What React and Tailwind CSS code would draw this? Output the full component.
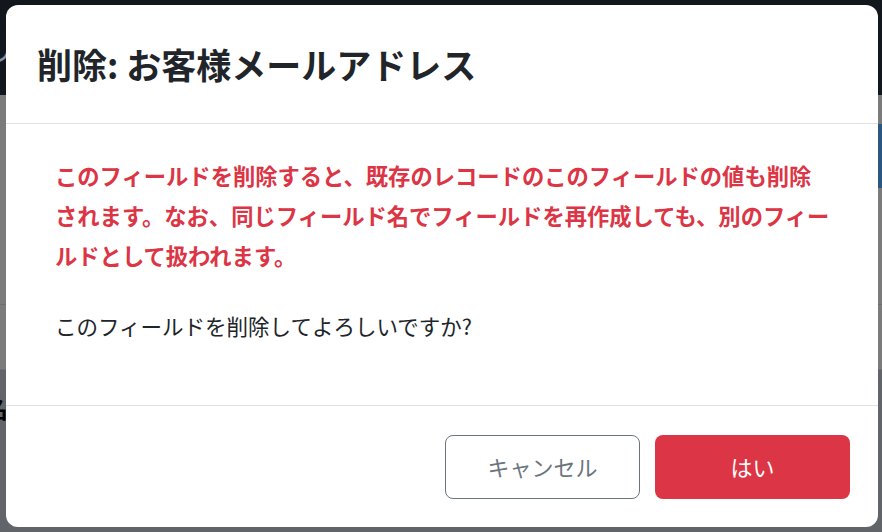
/**
 * DeleteFieldDialog - フィールド削除の確認モーダル
 */

const JP_FONT = "font-['Noto_Sans_CJK_JP','Noto_Sans',sans-serif]";

function PageBehind() {
  // モーダルの後ろに見えている画面 (背景は暗くなっている)
  return (
    <div className="flex h-full w-full flex-col">
      <div className="flex h-[95px] items-center bg-[#12171d]">
        <span className="-ml-[14px] text-[30px] text-[#7f8fa6]">リ</span>
      </div>
      <div className="flex flex-1 flex-col bg-[#7b7b7b]">
        <div className="h-[29px]" />
        <div className="flex h-[64px] justify-end">
          <div className="w-[6px] bg-[#2b5680]" />
        </div>
        <div className="h-[116px]" />
        <div className="h-px bg-[#6e6e6e]" />
        <div className="h-[64px]" />
        <div className="h-px bg-[#6e6e6e]" />
        <div className="flex flex-1 bg-[#616569] pt-[20px]">
          <span className="-ml-[16px] text-[24px] font-bold text-black">名</span>
        </div>
      </div>
    </div>
  );
}

export default function App() {
  return (
    <div className={`relative h-[532px] w-[882px] overflow-hidden ${JP_FONT}`}>
      <PageBehind />

      {/* モーダル */}
      <div className="absolute left-[6px] top-[5px] flex h-[522px] w-[872px] flex-col rounded-[12px] bg-white">
        {/* ヘッダー */}
        <div className="flex h-[119px] items-center border-b border-[#dee2e6] px-[31px]">
          <h2 className="text-[35px] font-semibold text-[#212529]">削除: お客様メールアドレス</h2>
        </div>

        {/* 本文 */}
        <div className="flex flex-1 flex-col px-[49px] pt-[31px]">
          <p className="whitespace-nowrap text-[22.3px] font-semibold leading-[40px] text-[#dc3545]">
            このフィールドを削除すると、既存のレコードのこのフィールドの値も削除
            <br />
            されます。なお、同じフィールド名でフィールドを再作成しても、別のフィー
            <br />
            ルドとして扱われます。
          </p>
          <p className="mt-[35px] text-[21.5px] leading-[32px] text-[#212529]">
            このフィールドを削除してよろしいですか?
          </p>
        </div>

        {/* フッター */}
        <div className="flex h-[122px] items-center justify-end gap-[15px] border-t border-[#dee2e6] pr-[28px]">
          <button className="h-[64px] w-[195px] rounded-[8px] border border-[#6c757d] bg-white text-[22px] text-[#6c757d]">
            キャンセル
          </button>
          <button className="h-[64px] w-[195px] rounded-[8px] bg-[#dc3545] text-[22px] text-white">
            はい
          </button>
        </div>
      </div>
    </div>
  );
}
